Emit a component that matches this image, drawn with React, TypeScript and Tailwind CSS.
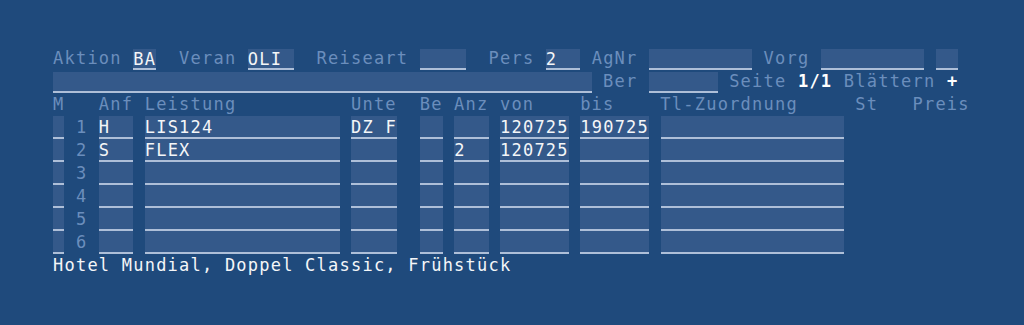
import React from 'react';

type Row = {
  n: number;
  m: string;
  anf: string;
  leistung: string;
  unte: string;
  be: string;
  anz: string;
  von: string;
  bis: string;
  tl: string;
};

const pad = (s: string, len: number) => (s + ' '.repeat(len)).slice(0, len);

const ROWS: Row[] = [
  { n: 1, m: '', anf: 'H', leistung: 'LIS124', unte: 'DZ F', be: '', anz: '', von: '120725', bis: '190725', tl: '' },
  { n: 2, m: '', anf: 'S', leistung: 'FLEX', unte: '', be: '', anz: '2', von: '120725', bis: '', tl: '' },
  { n: 3, m: '', anf: '', leistung: '', unte: '', be: '', anz: '', von: '', bis: '', tl: '' },
  { n: 4, m: '', anf: '', leistung: '', unte: '', be: '', anz: '', von: '', bis: '', tl: '' },
  { n: 5, m: '', anf: '', leistung: '', unte: '', be: '', anz: '', von: '', bis: '', tl: '' },
  { n: 6, m: '', anf: '', leistung: '', unte: '', be: '', anz: '', von: '', bis: '', tl: '' },
];

// label text, dim blue
const L = ({ t }: { t: string }) => <span className="text-[#6b8ebc]">{t}</span>;

// input field: lighter box with underline
const F = ({ v, len, short }: { v: string; len: number; short?: boolean }) => (
  <span
    className={`bg-[#34598a] text-[#f4f6f8] border-b-2 border-[#aebfd8] box-border ${
      short ? 'h-[21px] leading-[21px] self-end' : 'h-[23px] leading-[22px]'
    }`}
  >
    {pad(v, len)}
  </span>
);

const App: React.FC = () => {
  return (
    <div className="w-[1024px] h-[325px] bg-[#1f4a7c] pt-[47px] pl-[53px] overflow-hidden">
      <div className="font-['DejaVu_Sans_Mono',monospace] text-[17px] tracking-[1.225px] whitespace-pre">
        {/* Kopfzeile */}
        <div className="flex h-[23px] leading-[23px]">
          <L t="Aktion " />
          <F v="BA" len={2} short />
          <L t="  Veran " />
          <F v="OLI" len={4} short />
          <L t="  Reiseart " />
          <F v="" len={4} short />
          <L t="  Pers " />
          <F v="2" len={3} short />
          <L t=" AgNr " />
          <F v="" len={9} short />
          <L t=" Vorg " />
          <F v="" len={9} short />
          <L t=" " />
          <F v="" len={2} short />
        </div>

        <div className="flex h-[23px] leading-[23px]">
          <F v="" len={47} short />
          <L t=" Ber " />
          <F v="" len={6} short />
          <L t=" Seite " />
          <span className="text-white font-bold">1/1</span>
          <L t=" Blättern " />
          <span className="text-white font-bold">+</span>
        </div>

        <div className="flex h-[23px] leading-[23px]">
          <L t="M   Anf Leistung          Unte  Be Anz von    bis    Tl-Zuordnung     St   Preis" />
        </div>

        {/* Positionen */}
        {ROWS.map(r => (
          <div key={r.n} className="flex h-[23px] leading-[22px]">
            <F v={r.m} len={1} />
            <L t={` ${r.n} `} />
            <F v={r.anf} len={3} />
            <L t=" " />
            <F v={r.leistung} len={17} />
            <L t=" " />
            <F v={r.unte} len={4} />
            <L t="  " />
            <F v={r.be} len={2} />
            <L t=" " />
            <F v={r.anz} len={3} />
            <L t=" " />
            <F v={r.von} len={6} />
            <L t=" " />
            <F v={r.bis} len={6} />
            <L t=" " />
            <F v={r.tl} len={16} />
          </div>
        ))}

        <div className="h-[23px] leading-[23px] text-[#f4f6f8]">Hotel Mundial, Doppel Classic, Frühstück</div>
      </div>
    </div>
  );
};

export default App;
